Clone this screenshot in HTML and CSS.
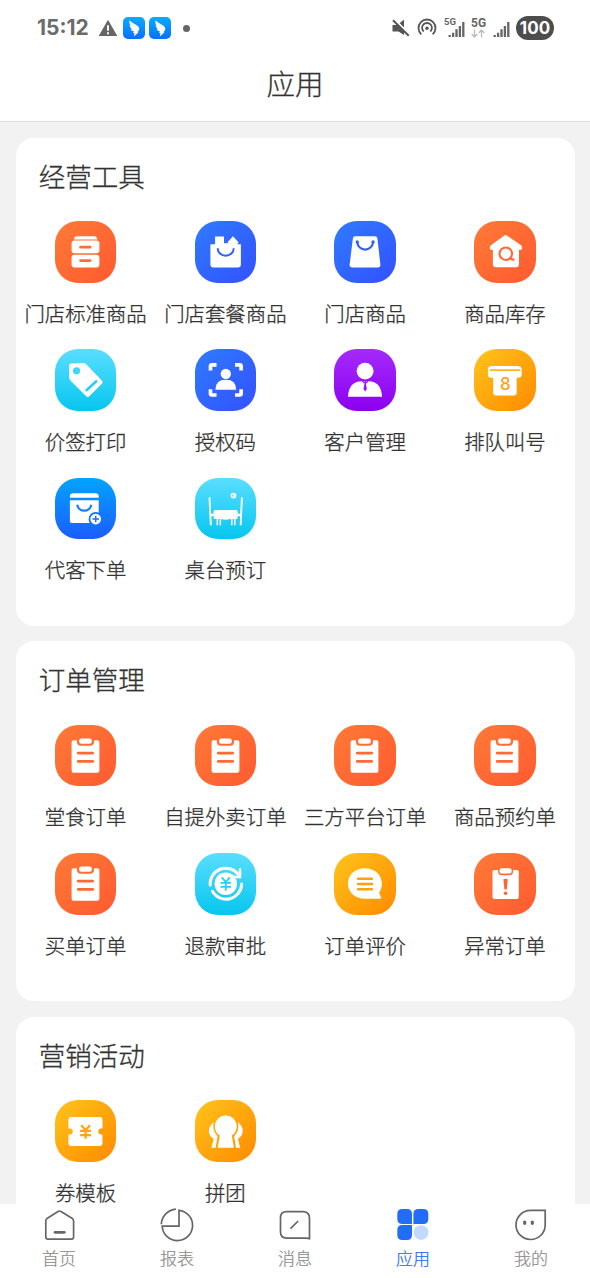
FILE: index.html
```html
<!DOCTYPE html>
<html lang="zh-CN">
<head>
<meta charset="utf-8">
<title>应用</title>
<link rel="stylesheet" href="styles.css">
</head>
<body>
<svg class="defs" width="0" height="0">
  <symbol id="clipboard" viewBox="0 0 62 62">
    <path fill="#fff" d="M18.700 15.300H22v1.400q0 4.300 4 4.300h9.300q4 0 4-4.300v-1.400h3.400q2 0 2 2V46q0 2-2 2h-24q-2 0-2-2V17.300q0-2 2-2z"/>
    <rect x="24.300" y="13.700" width="12.800" height="5.200" rx="2.200" fill="#fff"/>
    <path d="M23.300 28.300h14.700M23.300 36.700h14.700" stroke="#ff6a37" stroke-width="2.700" stroke-linecap="round"/>
  </symbol>
  <symbol id="wing" viewBox="0 0 22 22">
    <path fill="#fff" d="M6.600 3.200C8 5.600 12.500 6.800 15.200 9.500c1.500 1.500 1.300 2.800.2 4.500l-1 1.300 1 .1-4.600 4 .8-3.200-1.600-.3 1-1.600C8.800 14 8 13.200 7.700 12.200l1.600.3C7.500 11 6.600 9.600 6.500 8.200l1.300.8C6.500 7.200 6 5.200 6.600 3.200z"/>
  </symbol>
</svg>

<header class="status">
  <div class="status-left">
    <span class="clock">15:12</span>
    <svg class="warn" width="20" height="18" viewBox="0 0 20 18"><path d="M10 .8 19.300 17H.7z" fill="#666"/><path d="M10 6.300v5.400M10 13.300v2" stroke="#fff" stroke-width="1.900"/></svg>
    <svg class="ding" width="22" height="22"><use href="#wing"/></svg>
    <svg class="ding" width="22" height="22"><use href="#wing"/></svg>
    <i class="dot"></i>
  </div>
  <div class="status-right">
    <svg class="mute" width="18" height="20" viewBox="0 0 18 20"><path d="M.5 7H5.500L12 1.500v15.500L6.500 13.500h-6z" fill="#555"/><path d="M2.500 1.500l16 16" stroke="#fff" stroke-width="2.200"/><path d="M1 2.200l15.700 15.500" stroke="#555" stroke-width="1.900"/></svg>
    <svg class="hotspot" width="20" height="20" viewBox="0 0 20 20" fill="none" stroke="#555" stroke-width="1.800"><path d="M4.300 16.300a8.500 8.500 0 1 1 11.400 0M6.700 13.500a4.900 4.900 0 1 1 6.600 0"/><circle cx="10" cy="10.300" r="1.700" fill="#555" stroke="none"/></svg>
    <div class="signal">
      <span class="g5 small">5G</span>
      <svg width="17" height="17" viewBox="0 0 17 17"><path d="M1.700 16v-2M5.100 16v-4.200M8.500 16V8.300M11.900 16V5M15.300 16V1" stroke="#666" stroke-width="2.300"/></svg>
    </div>
    <div class="net">
      <span class="g5">5G</span>
      <svg width="14" height="9" viewBox="0 0 14 9" fill="none" stroke="#bbb" stroke-width="1.300"><path d="M3.500.5v7.300M.7 5l2.800 3 2.800-3M10.500 8.500V1.200M7.700 4l2.800-3 2.800 3"/></svg>
    </div>
    <svg class="bars" width="17" height="17" viewBox="0 0 17 17"><path d="M1.700 16v-2M5.100 16v-4.200M8.500 16V8.300M11.900 16V5M15.300 16V1" stroke="#666" stroke-width="2.300"/></svg>
    <span class="battery">100</span>
  </div>
</header>
<h1 class="title">应用</h1>

<main class="page">
  <section class="card">
    <h2>经营工具</h2>
    <div class="grid">
      <a class="item"><svg class="icon orange" viewBox="0 0 62 62"><path d="M22 15.300h17.700q2.500 0 3 3.400H19q.5-3.400 3-3.400z" fill="#fff"/><rect x="16.700" y="19.700" width="28" height="12.800" rx="3" fill="#fff"/><rect x="16.700" y="34" width="28" height="12.800" rx="3" fill="#fff"/><path d="M25.700 26.300h9.700M25.700 39.800h9.700" stroke="#ff6d36" stroke-width="2.700" stroke-linecap="round"/></svg><span>门店标准商品</span></a>
      <a class="item"><svg class="icon blue" viewBox="0 0 62 62"><path d="M15.500 23.500H20.200V15.700H29.200V22.500H34L32.700 21.300 38.200 15.300 43.800 21.300 42.700 23.500H46.200V44.200q0 2.500-2.500 2.500H18q-2.500 0-2.500-2.500z" fill="#fff"/><path d="M22.800 27.500a8.100 7.500 0 0 0 16.200 0" fill="none" stroke="#315fff" stroke-width="2"/></svg><span>门店套餐商品</span></a>
      <a class="item"><svg class="icon blue" viewBox="0 0 62 62"><path d="M21.500 15.300h19.700q2.300 0 2.500 2.300l3 26.500q.2 2.600-2.400 2.600H18q-2.600 0-2.300-2.600L19 17.600q.2-2.300 2.500-2.300z" fill="#fff"/><path d="M23.400 21.500a8 8.200 0 0 0 15.900 0" fill="none" stroke="#315fff" stroke-width="2.200"/><circle cx="23.400" cy="21.200" r="1.700" fill="#315fff"/><circle cx="39.300" cy="21.200" r="1.700" fill="#315fff"/></svg><span>门店商品</span></a>
      <a class="item"><svg class="icon orange" viewBox="0 0 62 62"><path d="M30.600 14.500q1.200-.8 2.400 0L47.400 24.300q1 .8 1 2v1.600q0 1.100-1.200 1.100h-1.900V44q0 2.500-2.500 2.500H21.500Q19 46.500 19 44V29h-1.700q-1.300 0-1.300-1.100v-1.600q0-1.200 1-2z" fill="#fff"/><circle cx="32" cy="32.900" r="6.300" fill="none" stroke="#ff6a37" stroke-width="2.100"/><path d="M36 37q1.800 2.200 4.700 1.800" fill="none" stroke="#ff6a37" stroke-width="2.300"/></svg><span>商品库存</span></a>
      <a class="item"><svg class="icon cyan" viewBox="0 0 62 62"><path d="M16.300 14.600 28.500 14q1.700 0 2.900 1.300L47.400 32q1.200 1.400 0 2.700L34.300 47.800q-1.300 1.200-2.600 0L15.300 31.500Q14.200 30.300 14.200 28.800V16.900q0-2.200 2.100-2.300z" fill="#fff"/><circle cx="21.700" cy="22" r="3.600" fill="#3bd6fa"/><path d="M31.700 41.500 41.500 32.500" stroke="#22cff5" stroke-width="2.500" stroke-linecap="round"/></svg><span>价签打印</span></a>
      <a class="item"><svg class="icon blue" viewBox="0 0 62 62"><path d="M15.600 21.700V17.300q0-1.400 1.400-1.400h4.700M40.300 15.900h4.700q1.400 0 1.400 1.400v4.400M46.400 40.500v4.400q0 1.400-1.400 1.400h-4.700M21.700 46.300h-4.700q-1.400 0-1.400-1.400v-4.400" fill="none" stroke="#fff" stroke-width="3.700"/><circle cx="31" cy="25" r="5.200" fill="#fff"/><path d="M20.500 41q0-10 10.500-10t10.500 10z" fill="#fff"/></svg><span>授权码</span></a>
      <a class="item"><svg class="icon purple" viewBox="0 0 62 62"><circle cx="31.300" cy="22.300" r="8.500" fill="#fff"/><path d="M14 48q1-15.600 14-15.600h6.700q12.700 0 13.700 15.600z" fill="#fff"/><path d="M28.500 32l2 2.300M34.200 32l-2 2.300" stroke="#9812f5" stroke-width="1.200"/><path d="M30.300 32.400h2.200l-.4 2.400 1 5.400-1.700 2.500-1.700-2.500 1-5.400z" fill="#9812f5"/></svg><span>客户管理</span></a>
      <a class="item"><svg class="icon amber" viewBox="0 0 62 62"><path d="M18 17h26q4 0 4 4v4.700q0 3.200-3.500 3.200H43V43.700q0 3-3 3H22.300q-3 0-3-3V28.900h-1.800q-3.500 0-3.500-3.200V21q0-4 4-4z" fill="#fff"/><path d="M16 21.200h30.500" stroke="#ffb031" stroke-width="1.700"/><text class="digit" x="31.400" y="41" text-anchor="middle">8</text></svg><span>排队叫号</span></a>
      <a class="item"><svg class="icon azure" viewBox="0 0 62 62"><path d="M18.200 15.300h22.600q3.200 0 3.200 3.200V20H15v-1.500q0-3.200 3.200-3.200zM15 22.300h29v23H17q-2 0-2-2z" fill="#fff"/><path d="M22.300 27a7.300 7.400 0 0 0 14.300 0" fill="none" stroke="#127fff" stroke-width="2.200"/><circle cx="41" cy="41.300" r="7.200" fill="#1470ff"/><circle cx="41" cy="41.300" r="5.400" fill="#fff"/><path d="M37.700 41.300h6.600M41 38v6.600" stroke="#1470ff" stroke-width="1.500"/></svg><span>代客下单</span></a>
      <a class="item"><svg class="icon cyan" viewBox="0 0 62 62"><path d="M14.600 19.500 15.200 33 16 47.500M47.200 19.500 46.600 33 46 47.500" fill="none" stroke="#fff" stroke-width="1.900"/><path d="M15 37.300h4M42.500 37.300h4" stroke="#fff" stroke-width="2.500"/><path d="M20.700 32.300h20.400q2.200 0 2 2.500l-.5 6.500h-6.900q-5 1.600-9.700 0h-7l-.4-6.500q-.2-2.500 2.100-2.500z" fill="#fff"/><path d="M22.500 41v6.500M25.500 41v6.500M37 41v6.500M40 41v6.500" stroke="#fff" stroke-width="1.600"/><circle cx="38.700" cy="17.700" r="2.900" fill="#fff"/><path d="M37.900 16.300v2h1.800" fill="none" stroke="#3fd7fb" stroke-width=".8"/></svg><span>桌台预订</span></a>
    </div>
  </section>

  <section class="card">
    <h2>订单管理</h2>
    <div class="grid">
      <a class="item"><svg class="icon orange"><use href="#clipboard"/></svg><span>堂食订单</span></a>
      <a class="item"><svg class="icon orange"><use href="#clipboard"/></svg><span>自提外卖订单</span></a>
      <a class="item"><svg class="icon orange"><use href="#clipboard"/></svg><span>三方平台订单</span></a>
      <a class="item"><svg class="icon orange"><use href="#clipboard"/></svg><span>商品预约单</span></a>
      <a class="item"><svg class="icon orange"><use href="#clipboard"/></svg><span>买单订单</span></a>
      <a class="item"><svg class="icon cyan" viewBox="0 0 62 62"><path d="M15.200 32.300A15.800 15.800 0 0 1 43.500 21.500M47 31.300A15.800 15.800 0 0 1 17.500 38.500" fill="none" stroke="#fff" stroke-width="3" stroke-linecap="round"/><path d="M45.300 16.500v7.800l-6-.4" fill="none" stroke="#fff" stroke-width="2.600" stroke-linecap="round" stroke-linejoin="round"/><circle cx="31" cy="30.900" r="11.300" fill="#fff"/><path d="M27 24.500l4 4.700 4-4.700M25.700 30h10.600M25.700 34h10.600M31 29.500v8.500" fill="none" stroke="#25cff5" stroke-width="1.800"/></svg><span>退款审批</span></a>
      <a class="item"><svg class="icon amber" viewBox="0 0 62 62"><path d="M31 15.300c9.700 0 17.200 6.500 17.200 15.500 0 3.600-1 6.700-2.900 9.200l2.200 4.600q.5 1.500-1 1.500H31C21.500 46.100 14 39.700 14 30.800 14 21.800 21.500 15.300 31 15.300z" fill="#fff"/><path d="M24.300 26h13.900M24.300 31.200h13.900M24.300 36.400h13.900" stroke="#ffa010" stroke-width="2.500" stroke-linecap="round"/></svg><span>订单评价</span></a>
      <a class="item"><svg class="icon orange" viewBox="0 0 62 62"><path d="M20.500 17h3.700v1q0 4.300 3.800 4.300h7.600q3.800 0 3.800-4.300v-1h3.800q1.900 0 1.900 2v25.400q0 2-1.900 2H20.500q-1.900 0-1.900-2V19q0-2 1.900-2z" fill="#fff"/><rect x="25.700" y="15.300" width="12.200" height="5.400" rx="2.200" fill="#fff"/><path d="M29.600 26.300q2.200-1 4.400 0l-1 10.400h-2.400z" fill="#ff6435"/><circle cx="31.800" cy="40.600" r="1.800" fill="#ff6435"/></svg><span>异常订单</span></a>
    </div>
  </section>

  <section class="card">
    <h2>营销活动</h2>
    <div class="grid">
      <a class="item"><svg class="icon amber" viewBox="0 0 62 62"><path d="M16.500 17h28.300q3 0 3 3v8.500a3.300 3.300 0 0 0 0 6.400v8.400q0 3-3 3H16.500q-3 0-3-3v-8.400a3.300 3.300 0 0 0 0-6.400V20q0-3 3-3z" fill="#fff"/><circle cx="15" cy="31.700" r="2.900" fill="#ffb119"/><circle cx="46.500" cy="31.700" r="2.900" fill="#ff9c0d"/><path d="M26.300 25.500l4.500 4.800 4.500-4.800M25.300 31h11M25.300 35.400h11M30.800 30v9" fill="none" stroke="#ffa515" stroke-width="2.200"/></svg><span>券模板</span></a>
      <a class="item"><svg class="icon amber" viewBox="0 0 62 62"><path d="M18.700 22.500q-5.500 4.300-4.700 10 .8 4.500 4.800 6.500L16.500 48h4.300l1.800-11.500Q17 31 18.700 22.500zM43.300 22.500q5.500 4.300 4.700 10-.8 4.500-4.800 6.500L45.500 48h-4.300l-1.800-11.500Q45 31 43.300 22.500z" fill="#fff"/><path d="M31 15.700a10.900 10.900 0 0 0-11 11q0 5.800 5 9L22.800 48h16.400L37 35.700q5-3.200 5-9a10.900 10.900 0 0 0-11-11z" fill="#fff"/></svg><span>拼团</span></a>
    </div>
  </section>
</main>

<nav class="tabs">
  <a class="tab"><svg viewBox="0 0 34 34"><path d="M15.600 3.700q1.900-1.400 3.800 0L30 10.200q1.600 1 1.600 2.700V29q0 2.200-2.200 2.200H6q-2.200 0-2.200-2.200V12.900q0-1.700 1.600-2.700z"/><path d="M13 24.300h9.300" stroke-width="2.700" stroke-linecap="round"/></svg><span>首页</span></a>
  <a class="tab"><svg viewBox="0 0 34 34"><path d="M19 2.300A15.200 15.200 0 1 1 2.200 18.200H19zM1.300 16.200A16 16 0 0 1 15.900 1.100"/></svg><span>报表</span></a>
  <a class="tab"><svg viewBox="0 0 34 34"><path d="M8.500 3.700h16.300q6.700 0 6.700 6.700v20.300l-3-.6H8.500q-6 0-6-6V9.700q0-6 6-6z"/><path d="M12.500 20.700l7.700-7.700"/></svg><span>消息</span></a>
  <a class="tab on"><svg viewBox="0 0 34 34"><path d="M6.300 1H11q5 0 5 5v10H6.300q-5 0-5-5V6q0-5 5-5zM22.500 1h4.800q5 0 5 5v5q0 5-5 5h-9.900V6q0-5 5.100-5zM6.300 17H16v10q0 5-5 5H6.300q-5 0-5-5v-5q0-5 5-5z" fill="#226df5" stroke="none"/><circle cx="25" cy="24.600" r="7.400" fill="#c2d8ff" stroke="none"/></svg><span>应用</span></a>
  <a class="tab"><svg viewBox="0 0 34 34"><path d="M16.500 2.300H31.200V17A14.600 14.600 0 1 1 16.500 2.300z"/><path d="M10.700 14.100v1.200M18.300 14.100v1.200" stroke-width="3.200" stroke-linecap="round"/></svg><span>我的</span></a>
</nav>
</body>
</html>
```

FILE: styles.css
```css
* { box-sizing: border-box; }
body {
  margin: 0;
  height: 1278px;
  overflow: hidden;
  display: flex;
  flex-direction: column;
  background: #f2f2f2;
  color: #333;
  font-family: "Noto Sans CJK SC", sans-serif;
  font-weight: 300;
}
.defs { position: absolute; }

.status {
  height: 56px;
  flex: none;
  display: flex;
  justify-content: space-between;
  align-items: center;
  padding: 0 36px 0 37px;
  background: #fff;
}
.status-left, .status-right { display: flex; align-items: center; }
.clock {
  width: 61px;
  font: 700 21px/30px Inter, sans-serif;
  color: #6b6b6b;
}
.warn { margin-right: 5px; }
.ding {
  margin-right: 4px;
  border-radius: 5px;
  background: linear-gradient(#08acff, #0670ff);
}
.dot {
  width: 7px;
  height: 7px;
  margin-left: 8px;
  border-radius: 50%;
  background: #666;
}
.mute { margin-right: 7px; }
.hotspot { margin-right: 7px; }
.signal { position: relative; width: 21px; height: 20px; margin-right: 6px; display: flex; align-items: flex-end; justify-content: flex-end; }
.g5 { font: 700 12px/10px Roboto, sans-serif; color: #666; }
.g5.small { position: absolute; left: 0; top: -1px; font-size: 9.500px; }
.net { width: 14px; height: 20px; margin-right: 8px; display: flex; flex-direction: column; justify-content: space-between; }
.bars { margin: 3px 6px 0 0; }
.battery {
  width: 38px;
  height: 24px;
  border-radius: 12px;
  background: #4d4d4d;
  color: #fff;
  font: 700 17px/24px Inter, sans-serif;
  text-align: center;
}

.title {
  flex: none;
  height: 66px;
  margin: 0;
  border-bottom: 1px solid #dedede;
  background: #fff;
  font-size: 28.500px;
  font-weight: 300;
  line-height: 54px;
  text-align: center;
}
.title, .card h2, .item span { -webkit-text-stroke: .3px #333; }

.page {
  flex: 1;
  min-height: 0;
  display: flex;
  flex-direction: column;
  gap: 15.500px;
  padding: 15.700px 15.200px 0 15.700px;
}
.card {
  flex: none;
  padding-bottom: 19.700px;
  border-radius: 18px;
  background: #fff;
}
.card h2 {
  margin: 0;
  padding-left: 23px;
  font-size: 26.500px;
  font-weight: 300;
  line-height: 76px;
  height: 83.500px;
}
.grid { display: grid; grid-template-columns: repeat(4, 1fr); grid-auto-rows: 128.300px; }
.item { display: flex; flex-direction: column; align-items: center; gap: 19px; }
.item span { font-size: 20.400px; line-height: 23px; white-space: nowrap; }
.icon { width: 61.600px; height: 61.600px; border-radius: 23px; }
.orange { background: linear-gradient(135deg, #ff7a36, #ff5a30); }
.blue { background: linear-gradient(135deg, #2f7bff, #3350ff); }
.cyan { background: linear-gradient(#5adeff, #06c6ee); }
.purple { background: linear-gradient(#a42bfb, #8c00f0); }
.amber { background: linear-gradient(135deg, #ffc41a, #ff8a00); }
.azure { background: linear-gradient(#02a4ff, #1c5cff); }
.digit { font: 500 17px Inter, sans-serif; fill: #ffa012; }

.tabs {
  position: relative;
  flex: none;
  height: 74px;
  display: grid;
  grid-template-columns: repeat(5, 1fr);
  background: #fff;
}
.tab { display: flex; flex-direction: column; align-items: center; padding-top: 4px; color: #8c8c8c; }
.tab svg { width: 34px; height: 34px; fill: none; stroke: #666; stroke-width: 1.700; }
.tab span { font-size: 17px; line-height: 26px; margin-top: 3px; -webkit-text-stroke: .2px currentColor; }
.tab.on { color: #226df5; }
```
